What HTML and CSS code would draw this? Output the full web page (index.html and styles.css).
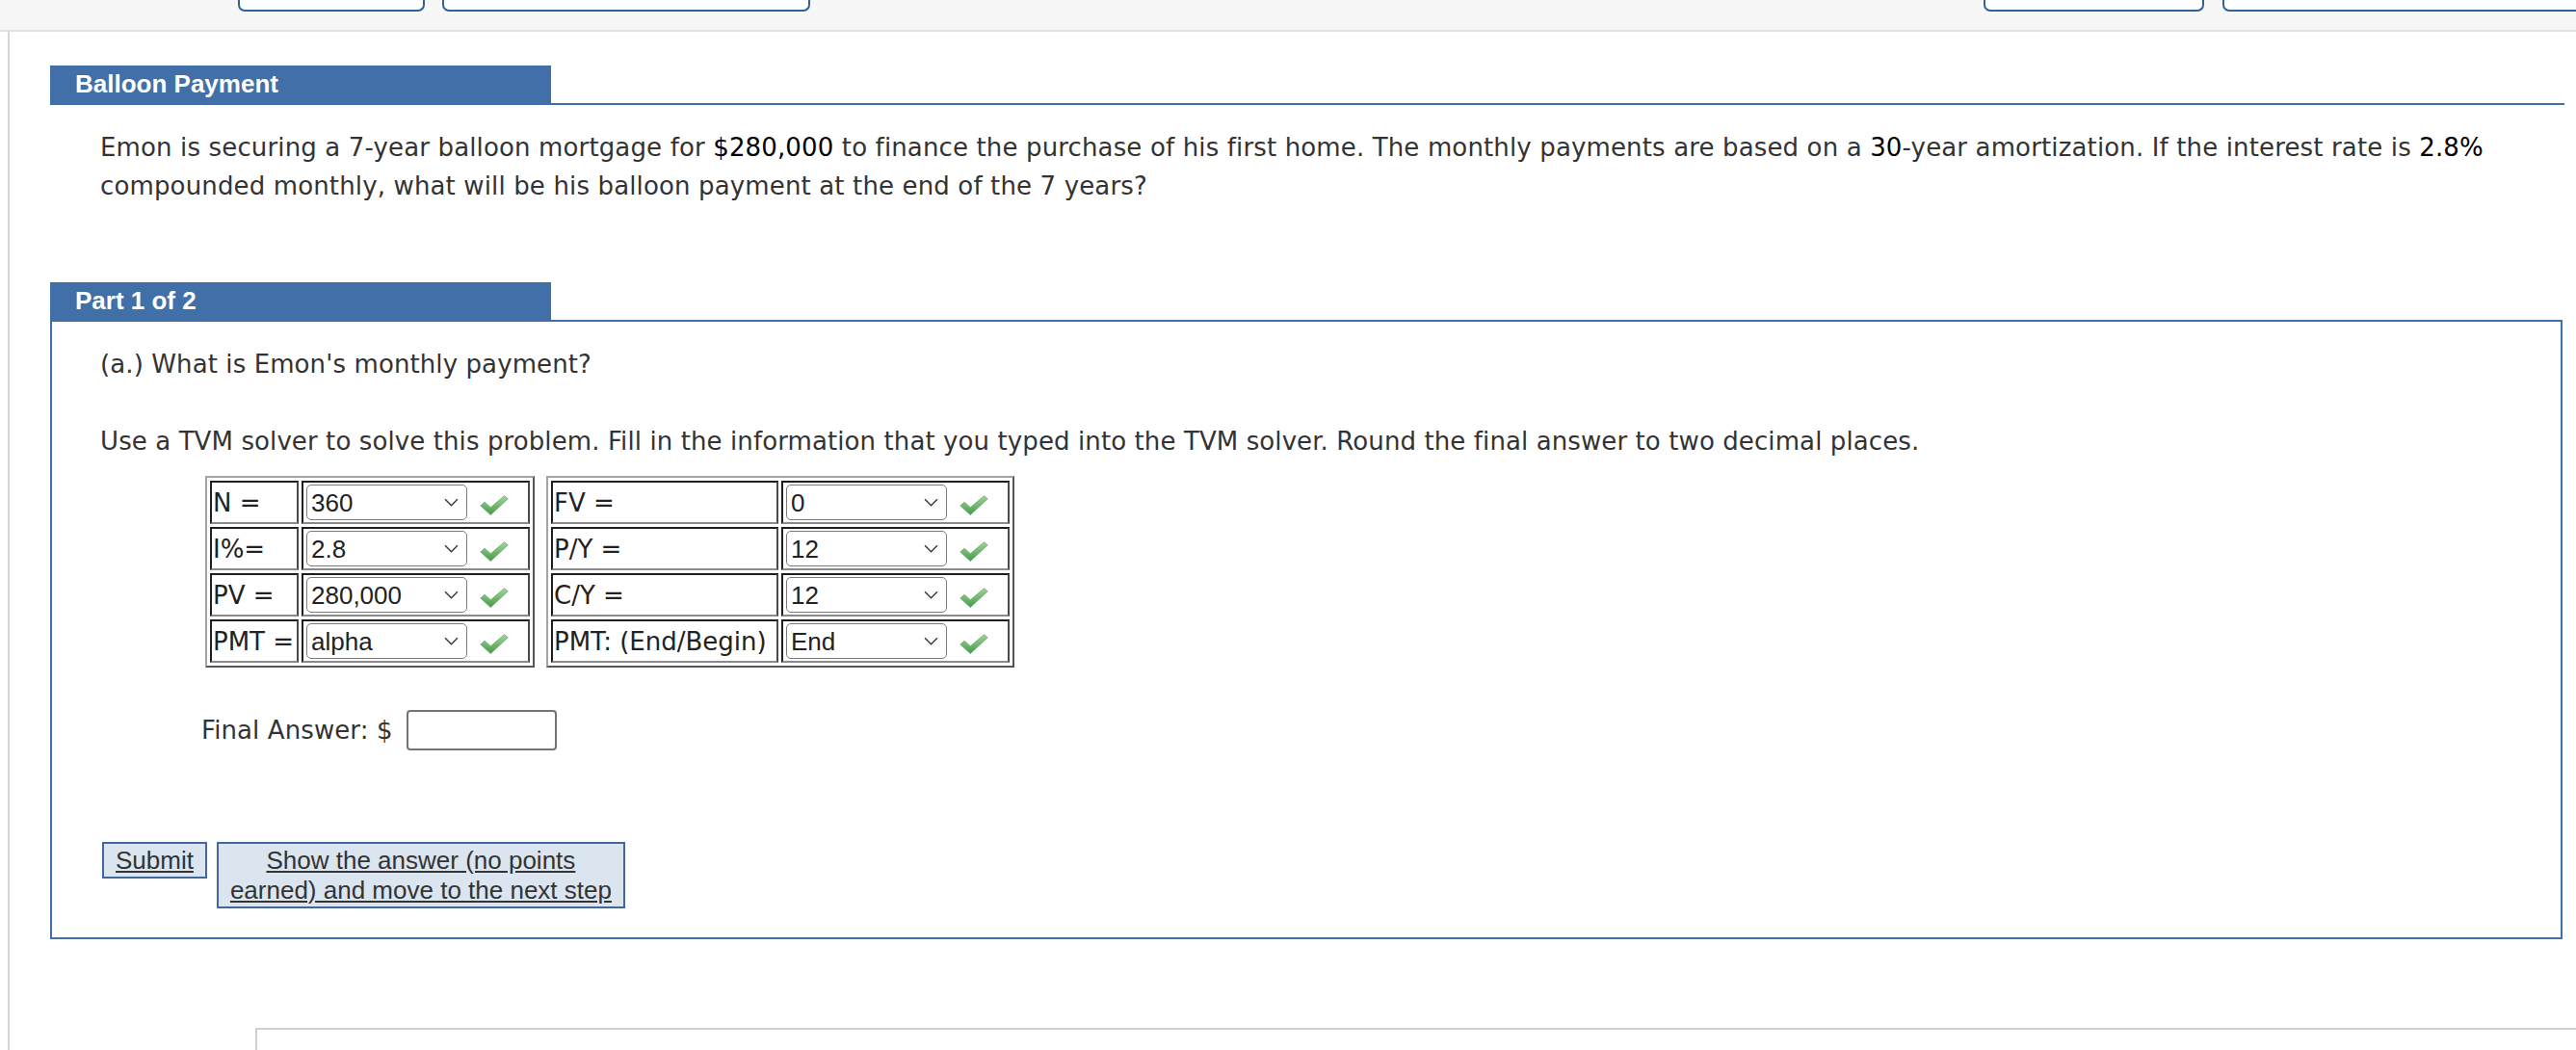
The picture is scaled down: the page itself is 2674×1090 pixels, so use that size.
FILE: index.html
```html
<!DOCTYPE html>
<html lang="en">
<head>
<meta charset="utf-8">
<title>Balloon Payment</title>
<link rel="stylesheet" href="styles.css">
</head>
<body>
<div class="topbar">
  <div class="tb-btn tb-1"></div>
  <div class="tb-btn tb-2"></div>
  <div class="tb-btn tb-3"></div>
  <div class="tb-btn tb-4"></div>
</div>
<div class="page">
  <div class="content">
    <div class="sec-head"><div class="tab">Balloon Payment</div></div>
    <p class="problem">Emon is securing a 7-year balloon mortgage for <span class="num">$280,000</span> to finance the purchase of his first home. The monthly payments are based on a <span class="num">30</span>-year amortization. If the interest rate is <span class="num">2.8%</span> compounded monthly, what will be his balloon payment at the end of the 7 years?</p>

    <div class="part-head"><div class="tab">Part 1 of 2</div></div>
    <div class="part-box">
      <p class="q">(a.) What is Emon's monthly payment?</p>
      <p class="q instr">Use a TVM solver to solve this problem. Fill in the information that you typed into the TVM solver. Round the final answer to two decimal places.</p>

      <div class="tvm">
        <table class="tvm-table">
          <tr><td class="lbl lbl-l">N =</td><td class="sel-cell sel-l"><div class="sel-row"><div class="select"><span>360</span><svg class="chev" viewBox="0 0 14 8" width="14" height="8"><polyline points="1,1 7,7 13,1"/></svg></div><svg class="check" viewBox="0 0 28 20" width="28" height="20"><path d="M0.5 10.5 L4.5 6.8 L10.5 12.2 L24 0.6 L27.6 3.6 L10.5 19.6 Z"/></svg></div></td></tr>
          <tr><td class="lbl lbl-l">I%=</td><td class="sel-cell sel-l"><div class="sel-row"><div class="select"><span>2.8</span><svg class="chev" viewBox="0 0 14 8" width="14" height="8"><polyline points="1,1 7,7 13,1"/></svg></div><svg class="check" viewBox="0 0 28 20" width="28" height="20"><path d="M0.5 10.5 L4.5 6.8 L10.5 12.2 L24 0.6 L27.6 3.6 L10.5 19.6 Z"/></svg></div></td></tr>
          <tr><td class="lbl lbl-l">PV =</td><td class="sel-cell sel-l"><div class="sel-row"><div class="select"><span>280,000</span><svg class="chev" viewBox="0 0 14 8" width="14" height="8"><polyline points="1,1 7,7 13,1"/></svg></div><svg class="check" viewBox="0 0 28 20" width="28" height="20"><path d="M0.5 10.5 L4.5 6.8 L10.5 12.2 L24 0.6 L27.6 3.6 L10.5 19.6 Z"/></svg></div></td></tr>
          <tr><td class="lbl lbl-l">PMT =</td><td class="sel-cell sel-l"><div class="sel-row"><div class="select"><span>alpha</span><svg class="chev" viewBox="0 0 14 8" width="14" height="8"><polyline points="1,1 7,7 13,1"/></svg></div><svg class="check" viewBox="0 0 28 20" width="28" height="20"><path d="M0.5 10.5 L4.5 6.8 L10.5 12.2 L24 0.6 L27.6 3.6 L10.5 19.6 Z"/></svg></div></td></tr>
        </table>
        <table class="tvm-table">
          <tr><td class="lbl lbl-r">FV =</td><td class="sel-cell sel-r"><div class="sel-row"><div class="select"><span>0</span><svg class="chev" viewBox="0 0 14 8" width="14" height="8"><polyline points="1,1 7,7 13,1"/></svg></div><svg class="check" viewBox="0 0 28 20" width="28" height="20"><path d="M0.5 10.5 L4.5 6.8 L10.5 12.2 L24 0.6 L27.6 3.6 L10.5 19.6 Z"/></svg></div></td></tr>
          <tr><td class="lbl lbl-r">P/Y =</td><td class="sel-cell sel-r"><div class="sel-row"><div class="select"><span>12</span><svg class="chev" viewBox="0 0 14 8" width="14" height="8"><polyline points="1,1 7,7 13,1"/></svg></div><svg class="check" viewBox="0 0 28 20" width="28" height="20"><path d="M0.5 10.5 L4.5 6.8 L10.5 12.2 L24 0.6 L27.6 3.6 L10.5 19.6 Z"/></svg></div></td></tr>
          <tr><td class="lbl lbl-r">C/Y =</td><td class="sel-cell sel-r"><div class="sel-row"><div class="select"><span>12</span><svg class="chev" viewBox="0 0 14 8" width="14" height="8"><polyline points="1,1 7,7 13,1"/></svg></div><svg class="check" viewBox="0 0 28 20" width="28" height="20"><path d="M0.5 10.5 L4.5 6.8 L10.5 12.2 L24 0.6 L27.6 3.6 L10.5 19.6 Z"/></svg></div></td></tr>
          <tr><td class="lbl lbl-r">PMT: (End/Begin)</td><td class="sel-cell sel-r"><div class="sel-row"><div class="select"><span>End</span><svg class="chev" viewBox="0 0 14 8" width="14" height="8"><polyline points="1,1 7,7 13,1"/></svg></div><svg class="check" viewBox="0 0 28 20" width="28" height="20"><path d="M0.5 10.5 L4.5 6.8 L10.5 12.2 L24 0.6 L27.6 3.6 L10.5 19.6 Z"/></svg></div></td></tr>
        </table>
      </div>

      <div class="final"><span>Final Answer: $</span><span class="answer"></span></div>

      <div class="actions">
        <button class="btn submit">Submit</button>
        <button class="btn show">Show the answer (no points earned) and move to the next step</button>
      </div>
    </div>

    <div class="next-box"></div>
  </div>
</div>

<svg class="defs" width="0" height="0">
  <defs>
    <linearGradient id="g" x1="0" y1="0" x2="0" y2="1">
      <stop offset="0" stop-color="#9fd69c"/>
      <stop offset="1" stop-color="#479a47"/>
    </linearGradient>
  </defs>
</svg>
</body>
</html>
```
FILE: styles.css
```css
html, body {
  margin: 0;
  padding: 0;
  overflow: hidden;
  background: #fff;
}

body {
  font-family: "DejaVu Sans", Verdana, sans-serif;
  color: #333;
}

.topbar {
  height: 31px;
  background: #f6f6f6;
  border-bottom: 2px solid #e1e1e1;
  display: flex;
  overflow: hidden;
}

.tb-btn {
  height: 12px;
  box-sizing: border-box;
  border: 2px solid #2f6396;
  border-top: none;
  border-radius: 0 0 7px 7px;
  background: #fff;
  flex: none;
}
.tb-1 { margin-left: 247px; width: 194px; }
.tb-2 { margin-left: 18px; width: 382px; }
.tb-3 { margin-left: 1218px; width: 229px; }
.tb-4 { margin-left: 19px; width: 390px; }

.page {
  margin-left: 8px;
  border-left: 2px solid #d6d6d6;
  height: 1057px;
}

.content {
  margin: 0 12px 0 42px;
  padding-top: 35px;
}

.sec-head {
  display: flex;
  border-bottom: 2px solid #4170a8;
}

.tab {
  width: 520px;
  height: 39px;
  box-sizing: border-box;
  padding-left: 26px;
  background: #4170a8;
  color: #fff;
  font: bold 26px/38px "Liberation Sans", Arial, sans-serif;
}

.problem {
  margin: 24px 0 0;
  padding: 0 40px 0 52px;
  font-size: 26px;
  line-height: 40px;
  letter-spacing: 0.14px;
  color: #333;
}
.num { color: #000; }

.part-head { margin-top: 80px; }

.part-box {
  border: 2px solid #4170a8;
  margin-right: 2px;
  padding: 24px 0 30px 50px;
}

.q {
  margin: 0;
  font-size: 26px;
  line-height: 40px;
  letter-spacing: 0.1px;
  color: #333;
}
.instr { margin-top: 40px; }

.tvm {
  display: flex;
  align-items: flex-start;
  gap: 12px;
  margin: 16px 0 0 109px;
}

.tvm-table {
  border-collapse: separate;
  border-spacing: 3px;
  border: 2px solid;
  border-color: #a3a3a3 #555 #555 #a3a3a3;
}

.tvm-table td {
  box-sizing: border-box;
  height: 45px;
  padding: 0 1px;
  border: 2px solid;
  border-color: #1f1f1f #4a4a4a #8a8a8a #1f1f1f;
  font-size: 26px;
  color: #222;
  white-space: nowrap;
  vertical-align: middle;
}

.lbl-l { width: 92px; }
.lbl-r { width: 236px; }
.sel-l { width: 237px; }
.sel-r { width: 237px; }

.sel-row {
  display: flex;
  align-items: center;
  gap: 13px;
  padding-left: 2px;
}

.select {
  width: 167px;
  height: 37px;
  box-sizing: border-box;
  border: 1.5px solid #7a7a7a;
  border-radius: 5px;
  background: #fff;
  display: flex;
  align-items: center;
  justify-content: space-between;
  padding: 0 8px 0 4px;
  font: 26px/30px "Liberation Sans", Arial, sans-serif;
  color: #222;
}

.chev {
  width: 15px;
  height: 9px;
}
.chev polyline {
  fill: none;
  stroke: #3a3a3a;
  stroke-width: 1.4;
}

.check {
  flex: none;
  width: 30px;
  height: 21px;
  margin-top: 6px;
}
.check path {
  fill: url(#g);
  stroke: #5a9c5a;
  stroke-width: 0.6;
  stroke-linejoin: round;
}

.defs { position: absolute; }

.final {
  display: flex;
  align-items: center;
  gap: 14px;
  margin: 44px 0 0 105px;
  font-size: 26px;
  line-height: 40px;
  letter-spacing: 0.1px;
  color: #333;
}

.answer {
  width: 156px;
  height: 42px;
  box-sizing: border-box;
  border: 2px solid #737373;
  border-radius: 4px;
  background: #fff;
}

.actions {
  display: flex;
  align-items: flex-start;
  gap: 10px;
  margin: 95px 0 0 2px;
}

.btn {
  margin: 0;
  padding: 1.5px 12px;
  border: 2px solid #41679c;
  border-radius: 0;
  background: #dbe5ef;
  color: #333;
  font: 26px/31px "Liberation Sans", Arial, sans-serif;
  text-decoration: underline;
  text-align: center;
}

.show {
  width: 424px;
  box-sizing: border-box;
  padding: 1.5px 10px;
}

.next-box {
  margin: 92px -12px 0 213px;
  height: 40px;
  border-top: 2px solid #cfcfcf;
  border-left: 2px solid #cfcfcf;
}
```
